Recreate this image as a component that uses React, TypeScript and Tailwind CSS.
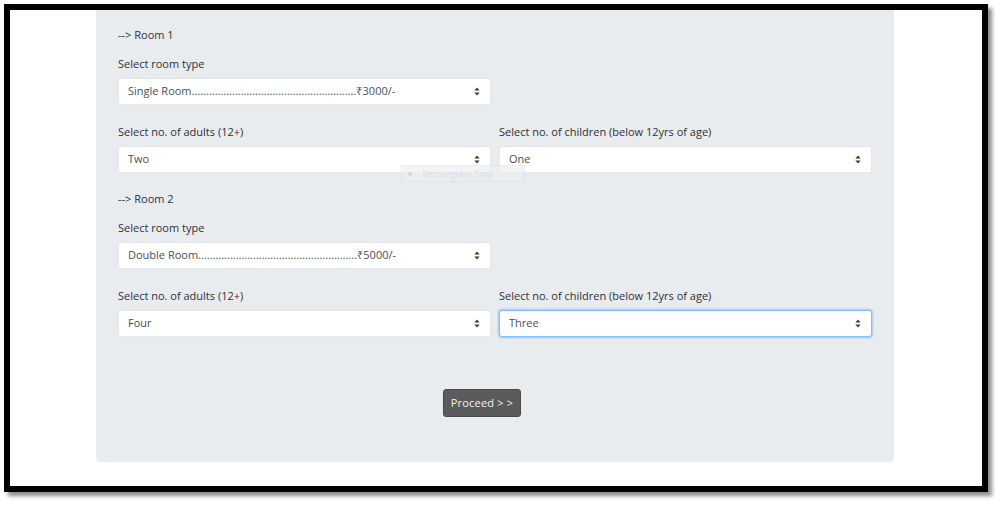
import React from 'react';

const Arrows: React.FC = () => (
    <svg width="6" height="9" viewBox="0 0 6 9" className="shrink-0">
        <path d="M3 0.5 L5.6 3.6 L0.4 3.6 Z" fill="#343a40" />
        <path d="M3 8.5 L5.6 5.4 L0.4 5.4 Z" fill="#343a40" />
    </svg>
);

interface SelectProps {
    value: string;
    focused?: boolean;
}

const FakeSelect: React.FC<SelectProps> = ({ value, focused }) => (
    <div
        className={
            focused
                ? 'h-[27px] flex items-center justify-between bg-white rounded-[3px] border border-[#80bdff] shadow-[0_0_0_1.5px_rgba(0,123,255,0.22)] pl-[9px] pr-[10px]'
                : 'h-[27px] flex items-center justify-between bg-white rounded-[3px] border border-[#e3e6ea] pl-[9px] pr-[10px]'
        }
    >
        <span className="text-[11px] text-[#495057] whitespace-nowrap overflow-hidden">{value}</span>
        <Arrows />
    </div>
);

const Label: React.FC<{ children: React.ReactNode; className?: string }> = ({ children, className }) => (
    <div className={`text-[11px] leading-[16px] text-[#2d3136] ${className ?? ''}`}>{children}</div>
);

const RoomBlock: React.FC<{ n: number; roomType: string; adults: string; children: string; focusChildren?: boolean; first?: boolean }> = ({
    n,
    roomType,
    adults,
    children,
    focusChildren,
    first,
}) => (
    <div className={first ? '' : 'mt-[18px]'}>
        <Label>--&gt; Room {n}</Label>
        <Label className="mt-[13px]">Select room type</Label>
        <div className="mt-[6px] grid grid-cols-2 gap-[8px]">
            <FakeSelect value={roomType} />
        </div>
        <div className="mt-[19px] grid grid-cols-2 gap-[8px]">
            <div>
                <Label>Select no. of adults (12+)</Label>
                <div className="mt-[6px]">
                    <FakeSelect value={adults} />
                </div>
            </div>
            <div>
                <Label>Select no. of children (below 12yrs of age)</Label>
                <div className="mt-[6px]">
                    <FakeSelect value={children} focused={focusChildren} />
                </div>
            </div>
        </div>
    </div>
);

const App: React.FC = () => {
    return (
        <div className="w-[1001px] h-[505px] bg-white relative" style={{ fontFamily: '"Open Sans", "Noto Sans", sans-serif' }}>
            <div className="absolute left-[4px] top-[4px] w-[984px] h-[488px] border-[6px] border-black bg-white shadow-[4px_4px_4px_rgba(0,0,0,0.45)] overflow-hidden">
                <div className="ml-[86px] w-[798px] h-[452px] bg-[#e9ecef] rounded-b-[4px] px-[22px] pt-[17px] relative">
                    <RoomBlock n={1} first roomType={`Single Room${'.'.repeat(57)}₹3000/-`} adults="Two" children="One" />
                    <RoomBlock n={2} roomType={`Double Room${'.'.repeat(55)}₹5000/-`} adults="Four" children="Three" focusChildren />
                    <div className="mt-[52px] flex">
                        <button className="ml-[325px] h-[28px] w-[78px] rounded-[3px] bg-[#5b5b5b] border border-[#4a4a4a] text-[11px] text-[#f2f2f2] tracking-[0.2px]">
                            Proceed &gt; &gt;
                        </button>
                    </div>
                    <div className="absolute left-[305px] top-[155px] w-[124px] h-[17px] border border-[#dfe3ea] bg-[#edf0f3] opacity-70 flex items-center pl-[6px] gap-[10px]">
                        <span className="w-[4px] h-[4px] rounded-full bg-[#c9ced6]"></span>
                        <span className="text-[9px] text-[#d2d6dc]">Rectangular Snip</span>
                    </div>
                </div>
            </div>
        </div>
    );
};

export default App;
